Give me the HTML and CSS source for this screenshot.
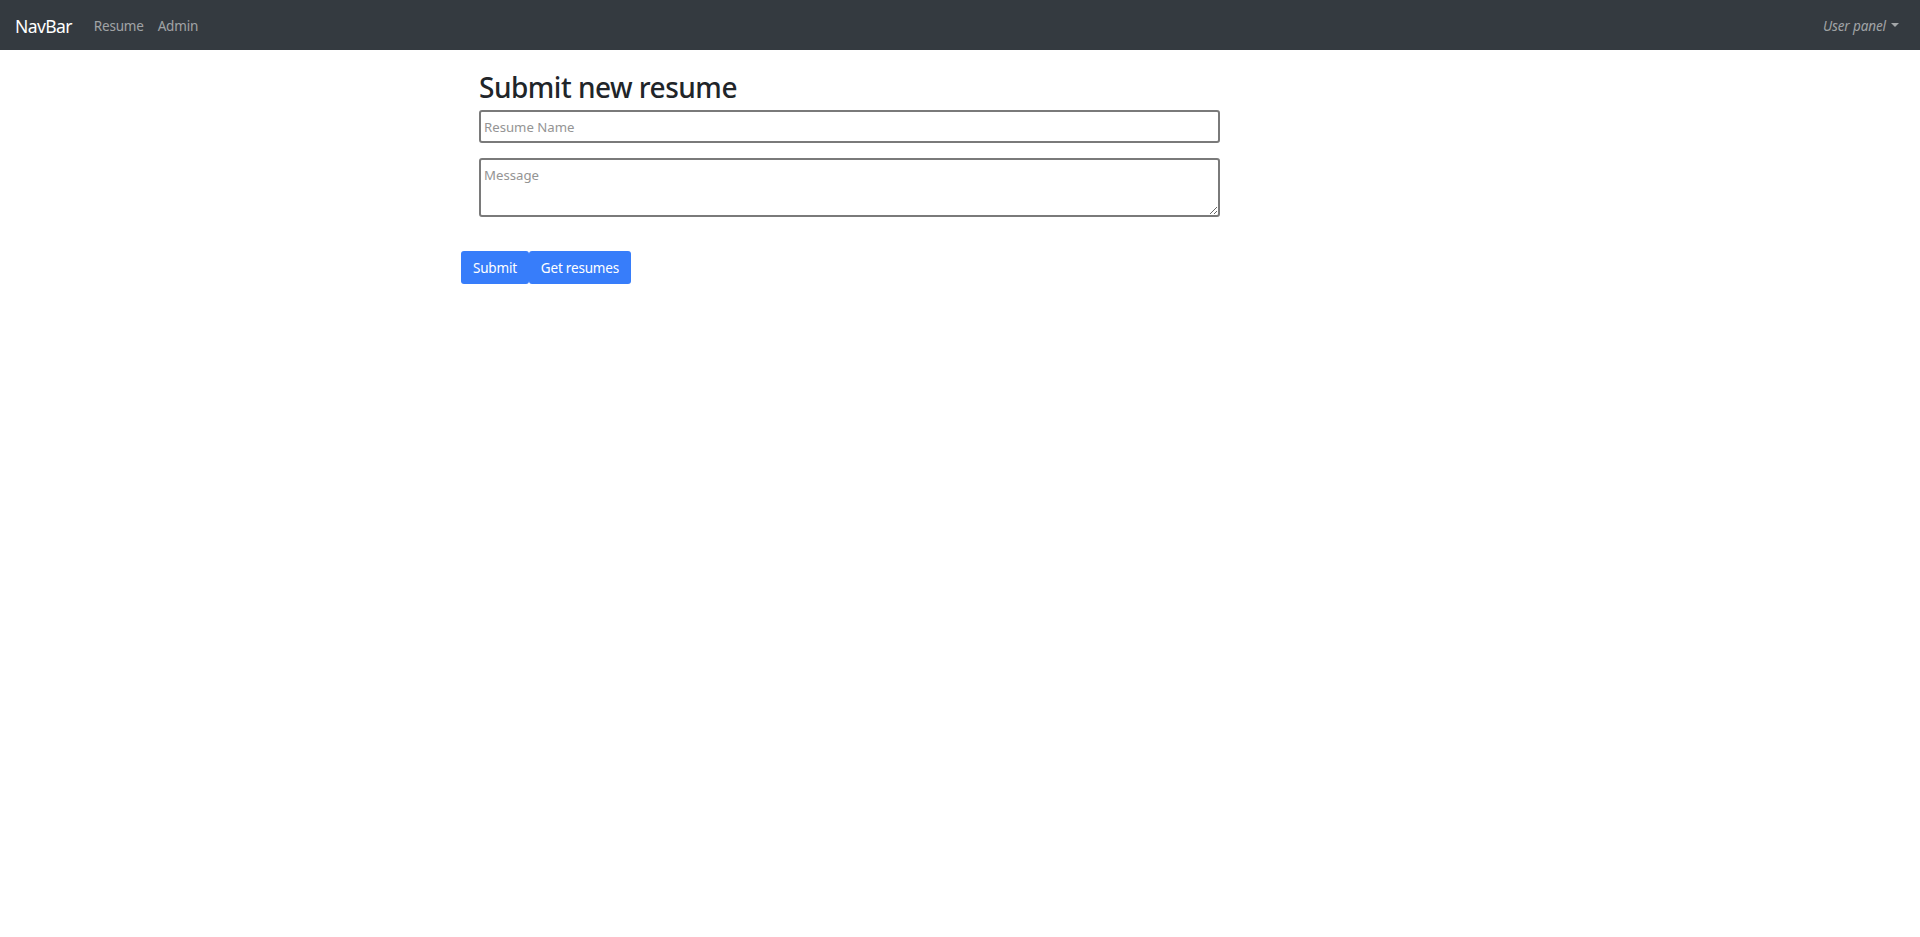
FILE: index.html
```html
<!DOCTYPE html>
<html lang="en">
<head>
<meta charset="utf-8">
<title>NavBar</title>
<link rel="stylesheet" href="styles.css">
</head>
<body>
<nav class="navbar">
  <div class="nav-left">
    <a class="brand" href="#">NavBar</a>
    <a class="nav-link" href="#">Resume</a>
    <a class="nav-link" href="#">Admin</a>
  </div>
  <a class="user-panel" href="#">User panel<span class="caret"></span></a>
</nav>
<main class="page">
  <form class="resume-form">
    <div class="fields">
      <h2 class="title">Submit new resume</h2>
      <input class="field" type="text" placeholder="Resume Name">
      <textarea class="field area" placeholder="Message"></textarea>
    </div>
    <div class="actions">
      <button class="btn" type="button">Submit</button><button class="btn" type="button">Get resumes</button>
    </div>
  </form>
</main>
</body>
</html>
```

FILE: styles.css
```css
* { box-sizing: border-box; }
html, body { margin: 0; padding: 0; background: #fff; }
body {
  font-family: "Noto Sans", "Open Sans", sans-serif;
  color: #212529;
}
.navbar {
  height: 50px;
  background: #343a40;
  display: flex;
  align-items: center;
  justify-content: space-between;
  padding: 2px 21px 0 15px;
}
.nav-left { display: flex; align-items: center; }
.brand {
  color: #fff;
  font-size: 17.5px;
  letter-spacing: -0.6px;
  text-decoration: none;
  margin-right: 22px;
}
.nav-link {
  color: rgba(255,255,255,.55);
  font-size: 13.5px;
  letter-spacing: -0.2px;
  text-decoration: none;
  margin-right: 14px;
}
.user-panel {
  color: rgba(255,255,255,.55);
  font-size: 13.5px;
  font-style: italic;
  letter-spacing: -0.1px;
  text-decoration: none;
  display: flex;
  align-items: center;
}
.caret {
  display: inline-block;
  margin-left: 5px;
  border-top: 4px solid rgba(255,255,255,.55);
  border-left: 4px solid transparent;
  border-right: 4px solid transparent;
  margin-top: -2px;
}
.page { padding-left: 461px; }
.resume-form { width: 760px; }
.fields { padding-left: 18px; width: 759px; }
.title {
  font-size: 28px;
  letter-spacing: -0.5px;
  font-weight: 500;
  margin: 0;
  padding-top: 20px;
  line-height: 35px;
  color: #212529;
}
.field {
  display: block;
  width: 741px;
  height: 33px;
  border: 2px solid #7a7a7a;
  border-radius: 3px;
  font-family: inherit;
  font-size: 13.2px;
  padding: 0 3px;
  margin-top: 5px;
  color: #212529;
}
.field::placeholder { color: #949494; }
.area {
  height: 59px;
  margin-top: 15px;
  padding: 6px 3px 4px;
  resize: vertical;
}
.actions { display: flex; margin-top: 34px; }
.btn {
  background: #377dfa;
  color: #fff;
  border: none;
  border-radius: 3px;
  height: 33px;
  font-family: inherit;
  font-size: 13.5px;
  letter-spacing: -0.2px;
  padding: 0 12px;
}
```
